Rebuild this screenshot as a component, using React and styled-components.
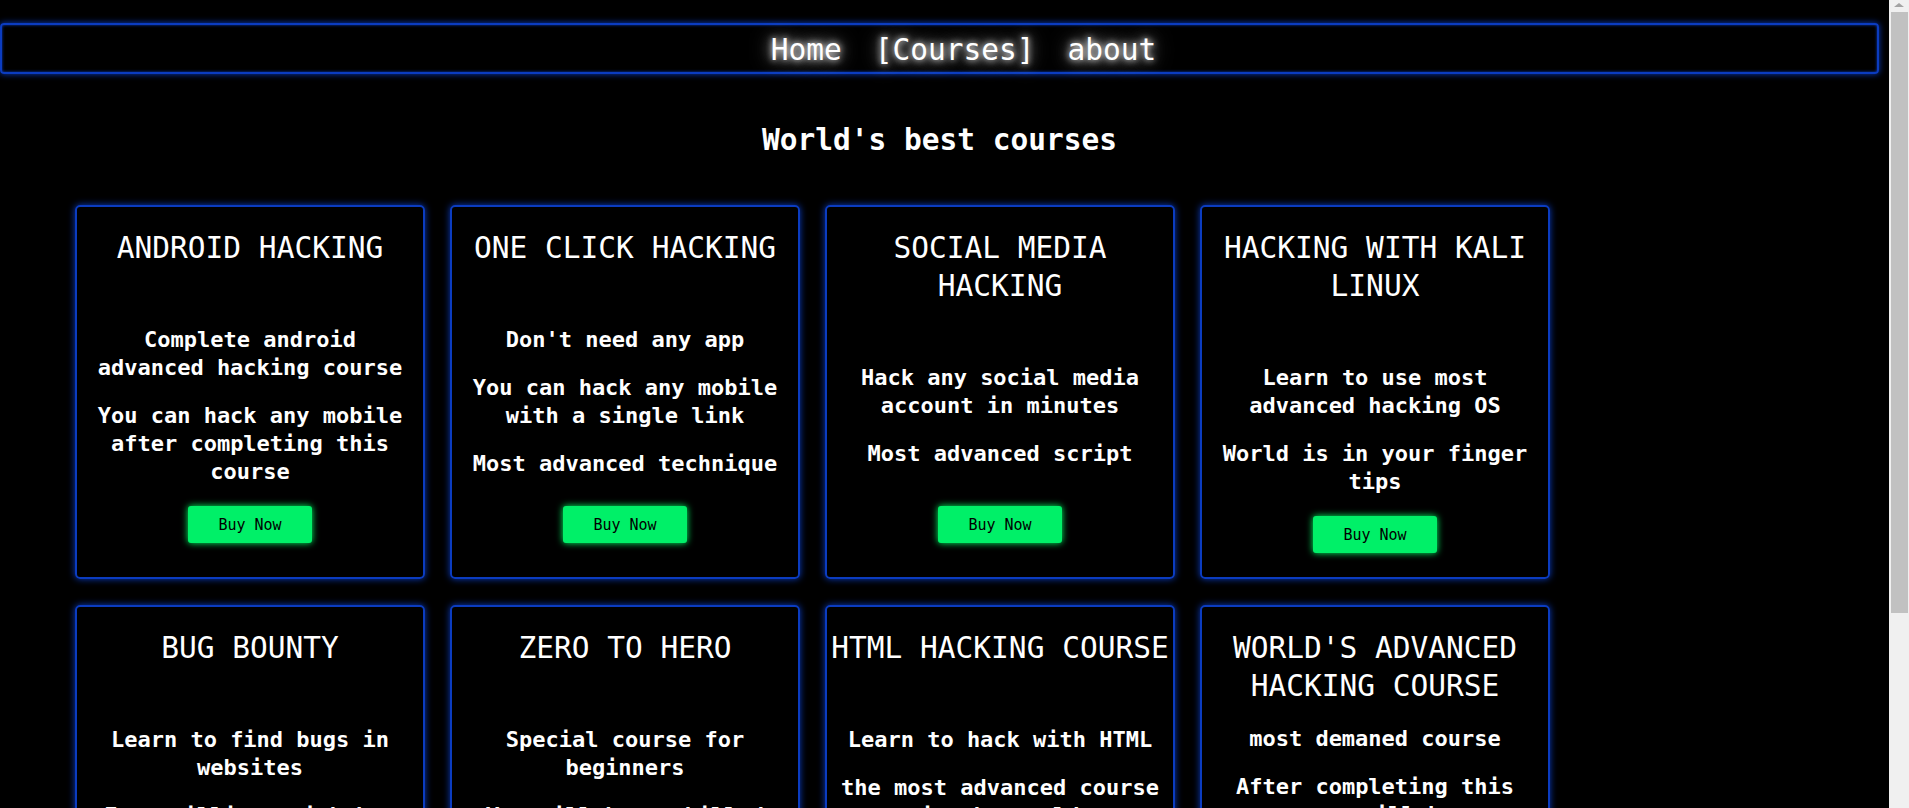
import React from "react";
import styled, { createGlobalStyle } from "styled-components";

const GlobalStyle = createGlobalStyle`
  html, body {
    margin: 0;
    padding: 0;
    background: #000;
  }
  body {
    font-family: "DejaVu Sans Mono", "Liberation Mono", monospace;
    color: #fff;
  }
`;

const Page = styled.div`
  padding: 23px 30px 75px 0;
`;

// mimics the browser's classic scrollbar seen in the screenshot
const ScrollTrack = styled.div`
  position: fixed;
  top: 0;
  right: 0;
  width: 20px;
  height: 100vh;
  background: #f0f0f0;
  display: flex;
  flex-direction: column;
  align-items: center;
`;

const ScrollArrow = styled.div`
  width: 0;
  height: 0;
  margin: 3px 0 5px;
  border-left: 5px solid transparent;
  border-right: 5px solid transparent;
  border-bottom: 4px solid #a3a3a3;
`;

const ScrollThumb = styled.div`
  align-self: stretch;
  margin: 0 1px 0 2px;
  height: 601px;
  background: #c1c1c1;
`;

const Nav = styled.nav`
  border: 2px solid #0b3cc0;
  border-radius: 4px;
  box-shadow: 0 0 6px #0b3cc0, inset 0 0 3px #0b3cc0;
  padding: 7px 0 3px 48px;
  display: flex;
  justify-content: center;
  gap: 33px;
`;

const NavLink = styled.a`
  font-size: 29.5px;
  line-height: 37px;
  color: #fff;
  text-decoration: none;
  text-shadow: 0 0 6px rgba(255, 255, 255, 0.9), 0 0 14px rgba(255, 255, 255, 0.7),
    0 0 24px rgba(255, 255, 255, 0.45);
`;

const Heading = styled.h1`
  margin: 48px 0 46px;
  font-size: 29.5px;
  line-height: 37px;
  font-weight: 700;
  text-align: center;
`;

const Grid = styled.div`
  display: flex;
  flex-wrap: wrap;
  gap: 26px 25px;
  padding-left: 75px;
`;

const Card = styled.div`
  box-sizing: border-box;
  width: 350px;
  height: 374px;
  border: 2px solid #0b3cc0;
  border-radius: 5px;
  box-shadow: 0 0 7px #0b3cc0;
  padding: 22px 0 34px;
  display: flex;
  flex-direction: column;
  & > * {
    flex-shrink: 0;
  }
`;

const CardTitle = styled.h2`
  margin: 0 0 ${({ $tight }) => ($tight ? "20px" : "59px")};
  font-size: 29.5px;
  line-height: 38px;
  font-weight: 400;
  text-align: center;
`;

const Desc = styled.div`
  padding: 0 10px;
`;

const Line = styled.p`
  margin: 0;
  font-size: 22px;
  line-height: 28px;
  font-weight: 700;
  text-align: center;
  & + & {
    margin-top: 20px;
  }
`;

const Spacer = styled.div`
  flex: 1 0 20px;
`;

const BuyButton = styled.button`
  align-self: center;
  width: 124px;
  height: 37px;
  border: none;
  border-radius: 3px;
  background: #00f068;
  box-shadow: 0 0 7px #00ff66;
  color: #000;
  font-family: "DejaVu Sans Mono", "Liberation Mono", monospace;
  font-size: 15px;
  cursor: pointer;
`;

const courses = [
  {
    title: "ANDROID HACKING",
    lines: [
      "Complete android advanced hacking course",
      "You can hack any mobile after completing this course",
    ],
  },
  {
    title: "ONE CLICK HACKING",
    lines: [
      "Don't need any app",
      "You can hack any mobile with a single link",
      "Most advanced technique",
    ],
  },
  {
    title: "SOCIAL MEDIA HACKING",
    lines: ["Hack any social media account in minutes", "Most advanced script"],
  },
  {
    title: "HACKING WITH KALI LINUX",
    lines: ["Learn to use most advanced hacking OS", "World is in your finger tips"],
  },
  {
    title: "BUG BOUNTY",
    lines: ["Learn to find bugs in websites", "Earn millions with bug bounty"],
  },
  {
    title: "ZERO TO HERO",
    lines: ["Special course for beginners", "You will be a skilled hacker"],
  },
  {
    title: "HTML HACKING COURSE",
    lines: ["Learn to hack with HTML", "the most advanced course in the world"],
  },
  {
    title: "WORLD'S ADVANCED HACKING COURSE",
    lines: ["most demaned course", "After completing this course you will be a pro"],
    tight: true,
  },
];

export default function App() {
  return (
    <>
      <GlobalStyle />
      <Page>
        <Nav>
          <NavLink href="#">Home</NavLink>
          <NavLink href="#">[Courses]</NavLink>
          <NavLink href="#">about</NavLink>
        </Nav>
        <Heading>World's best courses</Heading>
        <Grid>
          {courses.map((c) => (
            <Card key={c.title}>
              <CardTitle $tight={c.tight}>{c.title}</CardTitle>
              <Desc>
                {c.lines.map((l) => (
                  <Line key={l}>{l}</Line>
                ))}
              </Desc>
              <Spacer />
              <BuyButton>Buy Now</BuyButton>
            </Card>
          ))}
        </Grid>
      </Page>
      <ScrollTrack>
        <ScrollArrow />
        <ScrollThumb />
      </ScrollTrack>
    </>
  );
}
